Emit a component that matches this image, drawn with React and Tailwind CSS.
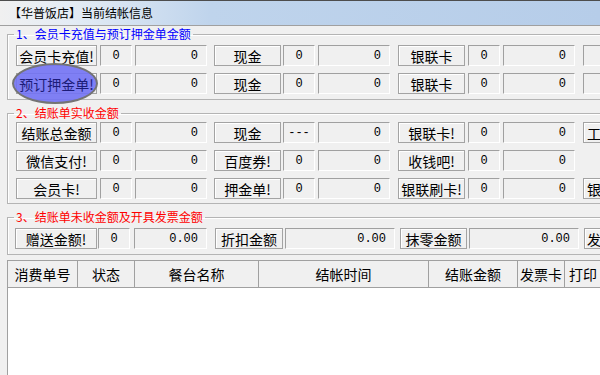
import React from 'react';

const Btn = ({ className = '', children }) => (
  <div className={`flex h-[21px] shrink-0 items-center justify-center overflow-hidden whitespace-nowrap border border-[#a3a3a3] bg-[#f0f0f0] text-[14px] leading-none text-black shadow-[inset_1px_1px_0_#fff] ${className}`}>
    {children}
  </div>
);

const Field = ({ className = '', center = false, children }) => (
  <div className={`flex h-[21px] shrink-0 items-center border border-t-[#a0a0a0] border-l-[#a0a0a0] border-b-white border-r-white bg-[#f0f0f0] font-['Liberation_Mono',monospace] text-[12px] leading-none text-black ${center ? 'justify-center' : 'justify-end pr-[8px]'} ${className}`}>
    {children}
  </div>
);

const Group = ({ title, color, className = '', children }) => (
  <fieldset className={`ml-[7px] w-[640px] shrink-0 border border-[#b4b4b4] pl-[6px] shadow-[inset_1px_1px_0_#fff] ${className}`}>
    <legend className={`px-[2px] text-[12px] leading-[16px] ${color}`}>{title}</legend>
    {children}
  </fieldset>
);

const AmountRow = ({ first, second, third, mid = '0', tail, className = '' }) => (
  <div className={`relative flex pl-[2px] ${className}`}>
    <Btn className="w-[81px]">{first}</Btn>
    <Field className="ml-[3px] w-[32px]" center>0</Field>
    <Field className="ml-[3px] w-[72px]">0</Field>
    <Btn className="ml-[7px] w-[67px]">{second}</Btn>
    <Field className="ml-[2px] w-[32px]" center>{mid}</Field>
    <Field className="ml-[3px] w-[72px]">0</Field>
    <Btn className="ml-[8px] w-[67px]">{third}</Btn>
    <Field className="ml-[3px] w-[32px]" center>0</Field>
    <Field className="ml-[3px] w-[72px]">0</Field>
    {tail}
  </div>
);

const columns = [
  { title: '消费单号', w: 'w-[70px] justify-center' },
  { title: '状态', w: 'w-[57px] justify-center' },
  { title: '餐台名称', w: 'w-[124px] justify-center' },
  { title: '结帐时间', w: 'w-[170px] justify-center' },
  { title: '结账金额', w: 'w-[89px] justify-center' },
  { title: '发票卡', w: 'w-[47px] justify-center' },
  { title: '打印', w: 'w-[56px] justify-start pl-[4px]' },
];

const App = () => {
  return (
    <div className="flex h-[375px] w-[600px] flex-col overflow-hidden bg-[#f0f0f0] font-['Noto_Sans_CJK_SC',sans-serif] text-black">
      <div className="flex h-[26px] shrink-0 items-center border-t border-b border-t-[#4d4d4d] border-b-[#a0a0a0] bg-[linear-gradient(to_right,#f0f0f0_0%,#e4ecf5_12%,#bfd4ec_35%,#b6cde9_100%)] pl-[9px] text-[12px] leading-none">
        【华普饭店】当前结帐信息
      </div>

      <Group title="1、会员卡充值与预订押金单金额" color="text-[#0000ff]" className="pb-[5px]">
        <div className="flex flex-col gap-[7px] pt-[3px]">
          <AmountRow first="会员卡充值!" second="现金" third="银联卡" tail={<Field className="ml-[8px] w-[60px]" />} />
          <AmountRow
            first={<span className="relative z-10 text-[#1c1c78]">预订押金单!</span>}
            second="现金"
            third="银联卡"
            tail={
              <>
                <Field className="ml-[8px] w-[60px]" />
                <div className="pointer-events-none absolute left-[-2px] top-[-10px] z-0 h-[41px] w-[86px] rounded-[50%] border-2 border-[#747474] bg-[#7272f4]/90" />
              </>
            }
          />
        </div>
      </Group>

      <Group title="2、结账单实收金额" color="text-[#ff0000]" className="mt-[5px] pb-[4px]">
        <div className="flex flex-col gap-[7px] pt-[1px]">
          <AmountRow first="结账总金额" second="现金" third="银联卡!" mid="---" tail={<Btn className="ml-[8px] w-[67px] justify-start pl-[3px]">工行卡!</Btn>} />
          <AmountRow first="微信支付!" second="百度券!" third="收钱吧!" />
          <AmountRow first="会员卡!" second="押金单!" third="银联刷卡!" tail={<Btn className="ml-[8px] w-[67px] justify-start pl-[3px]">银行卡!</Btn>} />
        </div>
      </Group>

      <Group title="3、结账单未收金额及开具发票金额" color="text-[#ff0000]" className="mt-[5px] pb-[5px]">
        <div className="flex pt-[3px] pl-[1px]">
          <Btn className="w-[82px]">赠送金额!</Btn>
          <Field className="ml-[1px] w-[32px]" center>0</Field>
          <Field className="ml-[4px] w-[73px]">0.00</Field>
          <Btn className="ml-[8px] w-[68px]">折扣金额</Btn>
          <Field className="ml-[2px] w-[110px]">0.00</Field>
          <Btn className="ml-[5px] w-[67px]">抹零金额</Btn>
          <Field className="ml-[2px] w-[110px]">0.00</Field>
          <Btn className="ml-[5px] w-[67px] justify-start pl-[2px]">发票金额</Btn>
        </div>
      </Group>

      <div className="ml-[7px] mt-[5px] flex w-[640px] flex-1 flex-col border-l border-t border-[#a0a0a0]">
        <div className="flex h-[27px] shrink-0 border-b border-[#a0a0a0] bg-[#f0f0f0]">
          {columns.map((col) => (
            <div key={col.title} className={`flex shrink-0 items-center border-r border-[#a0a0a0] text-[14px] leading-none ${col.w}`}>
              {col.title}
            </div>
          ))}
        </div>
        <div className="flex-1 bg-white" />
      </div>
    </div>
  );
};

export default App;
